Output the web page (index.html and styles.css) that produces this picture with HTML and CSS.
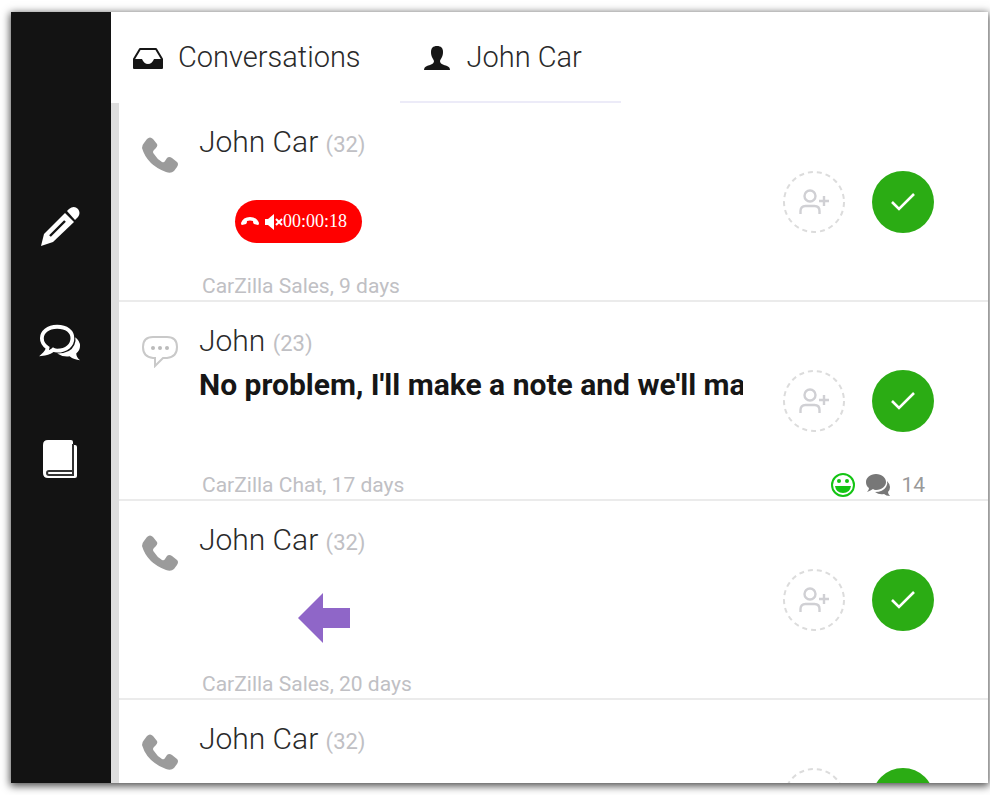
FILE: index.html
```html
<!DOCTYPE html>
<html lang="en">
<head>
    <meta charset="UTF-8">
    <meta name="viewport" content="width=device-width, initial-scale=1.0">
    <title>Conversations</title>
    <link rel="stylesheet" href="styles.css">
</head>
<body>
    <!-- Shared icons -->
    <svg class="sprite" aria-hidden="true">
        <symbol id="phone" viewBox="0 0 36 36">
            <path d="M2 6 L5 2 Q8 -1 11 2 L15 7 Q16 9 14 11 L12 13 Q10 15 12 17 Q15 22 20 25 Q22 26 23 24 L25 21 Q27 19 30 21 L35 25 Q37 27 35 30 L32 34 Q29 37 24 35 Q5 28 0 11 Q0 8 2 6Z" fill="#9b9b9b"/>
        </symbol>
        <symbol id="add-user" viewBox="0 0 30 26">
            <g fill="none" stroke="#d0d0d4" stroke-width="2.4">
                <circle cx="11" cy="7" r="5.5"/>
                <path d="M1.5 25v-3q0-5 5-5h9q5 0 5 5v3M20 12h10M25 7v10"/>
            </g>
        </symbol>
        <symbol id="check" viewBox="0 0 24 18">
            <path d="M1 9l7 7L23 1" fill="none" stroke="#fff" stroke-width="2.6"/>
        </symbol>
    </svg>

    <div class="frame">
        <div class="window">
            <nav class="sidebar">
                <button type="button" class="side-btn" aria-label="Compose">
                    <svg width="40" height="40" viewBox="0 0 40 40">
                        <path d="M1 39l3-12L25 6l9 9L13 35z" fill="#fff"/>
                        <path d="M27 4l2-2q5-4 9 0 3 4 0 8l-3 3z" fill="#fff"/>
                        <path d="M10 28L24 14l3 3L13 31z" fill="#fff"/>
                        <path d="M10 29L25 14" stroke="#131313" stroke-width="2.4"/>
                    </svg>
                </button>
                <button type="button" class="side-btn" aria-label="Chats">
                    <svg width="42" height="40" viewBox="0 0 44 40">
                        <path d="M38 14q5 4 5 9 0 5-4 8 0 4 4 7-6 0-11-4-7 1-13-3 14 0 18-9 2-4 1-8z" fill="#fff"/>
                        <path d="M19 3C9 3 3 9 3 15q0 6 6 10 0 3-3 6 6-1 9-4 2 1 4 1c10 0 16-6 16-13S29 3 19 3z" fill="#131313" stroke="#fff" stroke-width="4"/>
                    </svg>
                </button>
                <button type="button" class="side-btn" aria-label="Library">
                    <svg width="34" height="38" viewBox="0 0 34 38">
                        <path d="M5 0h23q2 0 2 2v3h2q2 0 2 2v29q0 2-2 2H5q-5 0-5-5V5q0-5 5-5z" fill="#fff"/>
                        <path d="M30 4v27H6q-2 0-2 2t2 2h24v-4" fill="none" stroke="#333" stroke-width="2"/>
                    </svg>
                </button>
            </nav>

            <main class="content">
                <nav class="tabs">
                    <a href="#" class="tab">
                        <svg width="30" height="24" viewBox="0 0 30 24">
                            <path d="M1 14L7 4h16l6 10v9H1z" fill="none" stroke="#161616" stroke-width="2" stroke-linejoin="round"/>
                            <path d="M1 14h8q2 5 6 5t6-5h8v9H1z" fill="#161616"/>
                        </svg>
                        Conversations
                    </a>
                    <a href="#" class="tab active">
                        <svg width="30" height="26" viewBox="0 0 30 26">
                            <path d="M15 2c4 0 6 2 6 6 0 5-2 6-3 9 0 3 4 4 7 5q3 1 3 4H2q0-3 3-4c3-1 7-2 7-5-1-3-3-4-3-9 0-4 2-6 6-6z" fill="#161616"/>
                        </svg>
                        John Car
                    </a>
                </nav>

                <div class="list">
                    <article class="row">
                        <svg class="channel" width="36" height="36"><use href="#phone"/></svg>
                        <h2 class="name">John Car <span class="count">(32)</span></h2>
                        <div class="preview">
                            <div class="call">
                                <svg width="18" height="10" viewBox="0 0 18 10">
                                    <path d="M0 6q2-6 9-6t9 6q0 2-1 2l-4-1q-1 0-1-3-3-1-6 0 0 3-1 3l-4 1q-1 0-1-2z" fill="#fff"/>
                                </svg>
                                <svg class="mute" width="18" height="16" viewBox="0 0 18 16">
                                    <path d="M0 5h3l6-5v16l-6-5H0z" fill="#fff"/>
                                    <path d="M11 5l6 6M17 5l-6 6" stroke="#fff" stroke-width="2"/>
                                </svg>
                                <span>00:00:18</span>
                            </div>
                        </div>
                        <div class="actions">
                            <button type="button" class="round assign" aria-label="Assign">
                                <svg width="62" height="62" class="ring"><circle cx="31" cy="31" r="30"/></svg>
                                <svg width="30" height="26"><use href="#add-user"/></svg>
                            </button>
                            <button type="button" class="round done" aria-label="Resolve"><svg width="24" height="18"><use href="#check"/></svg></button>
                        </div>
                        <div class="meta"><span>CarZilla Sales, 9 days</span></div>
                    </article>

                    <article class="row">
                        <svg class="channel" width="36" height="32" viewBox="0 0 36 32">
                            <path d="M11 1h14q10 0 10 10t-10 11h-4l-8 8v-8h-2Q1 21 1 11T11 1z" fill="none" stroke="#c9c9c9" stroke-width="2"/>
                            <g fill="#bbb"><circle cx="11" cy="12" r="2"/><circle cx="18" cy="12" r="2"/><circle cx="25" cy="12" r="2"/></g>
                        </svg>
                        <h2 class="name">John <span class="count">(23)</span></h2>
                        <p class="preview message">No problem, I'll make a note and we'll ma</p>
                        <div class="actions">
                            <button type="button" class="round assign" aria-label="Assign">
                                <svg width="62" height="62" class="ring"><circle cx="31" cy="31" r="30"/></svg>
                                <svg width="30" height="26"><use href="#add-user"/></svg>
                            </button>
                            <button type="button" class="round done" aria-label="Resolve"><svg width="24" height="18"><use href="#check"/></svg></button>
                        </div>
                        <div class="meta">
                            <span>CarZilla Chat, 17 days</span>
                            <span class="stats">
                                <svg width="24" height="24" viewBox="0 0 24 24">
                                    <circle cx="12" cy="12" r="11" fill="none" stroke="#13c413" stroke-width="2"/>
                                    <circle cx="8" cy="8" r="2" fill="#13c413"/>
                                    <circle cx="16" cy="8" r="2" fill="#13c413"/>
                                    <path d="M4 13h16q-1 7-8 7t-8-7z" fill="#13c413"/>
                                </svg>
                                <svg width="24" height="22" viewBox="0 0 24 22">
                                    <path d="M21 7q3 3 3 6 0 3-2 5 0 2 2 4-4 0-6-2-5 1-9-2 8 0 11-5 2-3 1-6z" fill="#777"/>
                                    <path d="M10 0c6 0 10 4 10 8s-4 8-10 8q-2 0-3-1-3 2-6 3 2-2 2-4-3-2-3-6c0-4 4-8 10-8z" fill="#777"/>
                                </svg>
                                14
                            </span>
                        </div>
                    </article>

                    <article class="row">
                        <svg class="channel" width="36" height="36"><use href="#phone"/></svg>
                        <h2 class="name">John Car <span class="count">(32)</span></h2>
                        <div class="preview">
                            <svg class="arrow" width="52" height="50" viewBox="0 0 52 50">
                                <path d="M0 25L25 0v15h27v20H25v15z" fill="#8f66c8"/>
                            </svg>
                        </div>
                        <div class="actions">
                            <button type="button" class="round assign" aria-label="Assign">
                                <svg width="62" height="62" class="ring"><circle cx="31" cy="31" r="30"/></svg>
                                <svg width="30" height="26"><use href="#add-user"/></svg>
                            </button>
                            <button type="button" class="round done" aria-label="Resolve"><svg width="24" height="18"><use href="#check"/></svg></button>
                        </div>
                        <div class="meta"><span>CarZilla Sales, 20 days</span></div>
                    </article>

                    <article class="row">
                        <svg class="channel" width="36" height="36"><use href="#phone"/></svg>
                        <h2 class="name">John Car <span class="count">(32)</span></h2>
                        <div class="actions">
                            <button type="button" class="round assign" aria-label="Assign">
                                <svg width="62" height="62" class="ring"><circle cx="31" cy="31" r="30"/></svg>
                            </button>
                            <button type="button" class="round done" aria-label="Resolve"></button>
                        </div>
                    </article>
                </div>
            </main>
        </div>
    </div>
</body>
</html>
```
FILE: styles.css
```css
* {
    box-sizing: border-box;
}

body {
    margin: 0;
    background-color: #fff;
    color: #2a2a2a;
    font-family: Roboto, sans-serif;
    font-size: 29px;
    font-weight: 300;
}

svg {
    display: block;
    flex-shrink: 0;
}

button {
    padding: 0;
    border: none;
    background: none;
    cursor: pointer;
}

.sprite {
    display: none;
}

/* Window */
.frame {
    height: 100vh;
    margin-right: 10px;
    padding: 12px 2px 12px 11px;
    overflow: hidden;
}

.window {
    display: flex;
    height: 100%;
    background-color: #fff;
    box-shadow: 0 2px 8px 1px rgba(0, 0, 0, 0.7);
}

.sidebar {
    display: flex;
    flex-direction: column;
    align-items: center;
    gap: 56px;
    width: 100px;
    padding: 185px 3px 0 0;
    background-color: #131313;
    flex-shrink: 0;
}

.side-btn {
    display: flex;
    align-items: center;
    justify-content: center;
    width: 60px;
    height: 60px;
}

.content {
    display: flex;
    flex-direction: column;
    flex: 1;
    min-width: 0;
}

/* Tabs */
.tabs {
    display: flex;
    height: 91px;
    flex-shrink: 0;
}

.tab {
    display: flex;
    align-items: center;
    gap: 15px;
    padding: 0 39px 0 22px;
    border-bottom: 2px solid transparent;
    color: #2a2a2a;
    text-decoration: none;
    white-space: nowrap;
}

.tab.active {
    border-bottom-color: #ecebf8;
}

/* Conversation list */
.list {
    flex: 1;
    min-height: 0;
    overflow: hidden;
    border-left: 8px solid #dedede;
}

.row {
    display: grid;
    grid-template-columns: 80px minmax(0, 1fr) auto;
    grid-template-rows: 40px 1fr 29px;
    height: 199px;
    padding: 19px 54px 0 0;
    border-bottom: 2px solid #ebebeb;
}

.channel {
    grid-column: 1;
    grid-row: 1 / 3;
    margin: 15px 0 0 23px;
}

.name {
    grid-column: 2;
    grid-row: 1;
    margin: 0;
    font-size: 30px;
    font-weight: 300;
    line-height: 40px;
    white-space: nowrap;
}

.count {
    color: #c0c0c4;
    font-size: 22px;
    font-weight: 400;
}

.preview {
    grid-column: 2;
    grid-row: 2;
    margin: 0;
    overflow: hidden;
    white-space: nowrap;
}

.message {
    color: #161616;
    font-size: 30px;
    font-weight: 700;
    line-height: 48px;
}

.call {
    display: flex;
    align-items: center;
    width: 127px;
    height: 43px;
    margin: 38px 0 0 36px;
    padding-left: 6px;
    border-radius: 22px;
    background-color: #f00;
    color: #fff;
    font-family: "Liberation Serif", serif;
    font-size: 18px;
    font-weight: 400;
}

.mute {
    margin-left: 6px;
}

.arrow {
    margin: 33px 0 0 99px;
}

.actions {
    grid-column: 3;
    grid-row: 1 / 4;
    display: flex;
    gap: 27px;
    margin: 49px 0 0 40px;
    align-self: start;
}

.round {
    position: relative;
    display: flex;
    align-items: center;
    justify-content: center;
    width: 62px;
    height: 62px;
    border-radius: 50%;
}

.ring {
    position: absolute;
    top: 0;
    left: 0;
    fill: none;
    stroke: #dcdcdc;
    stroke-width: 2;
    stroke-dasharray: 5 4;
}

.done {
    background-color: #2bac14;
}

.meta {
    grid-column: 2 / 4;
    grid-row: 3;
    display: flex;
    align-items: center;
    justify-content: space-between;
    padding: 0 9px 0 3px;
    color: #c0c0c4;
    font-size: 21px;
    font-weight: 400;
    line-height: 28px;
}

.stats {
    display: flex;
    align-items: center;
    gap: 11px;
    color: #999;
}
```
